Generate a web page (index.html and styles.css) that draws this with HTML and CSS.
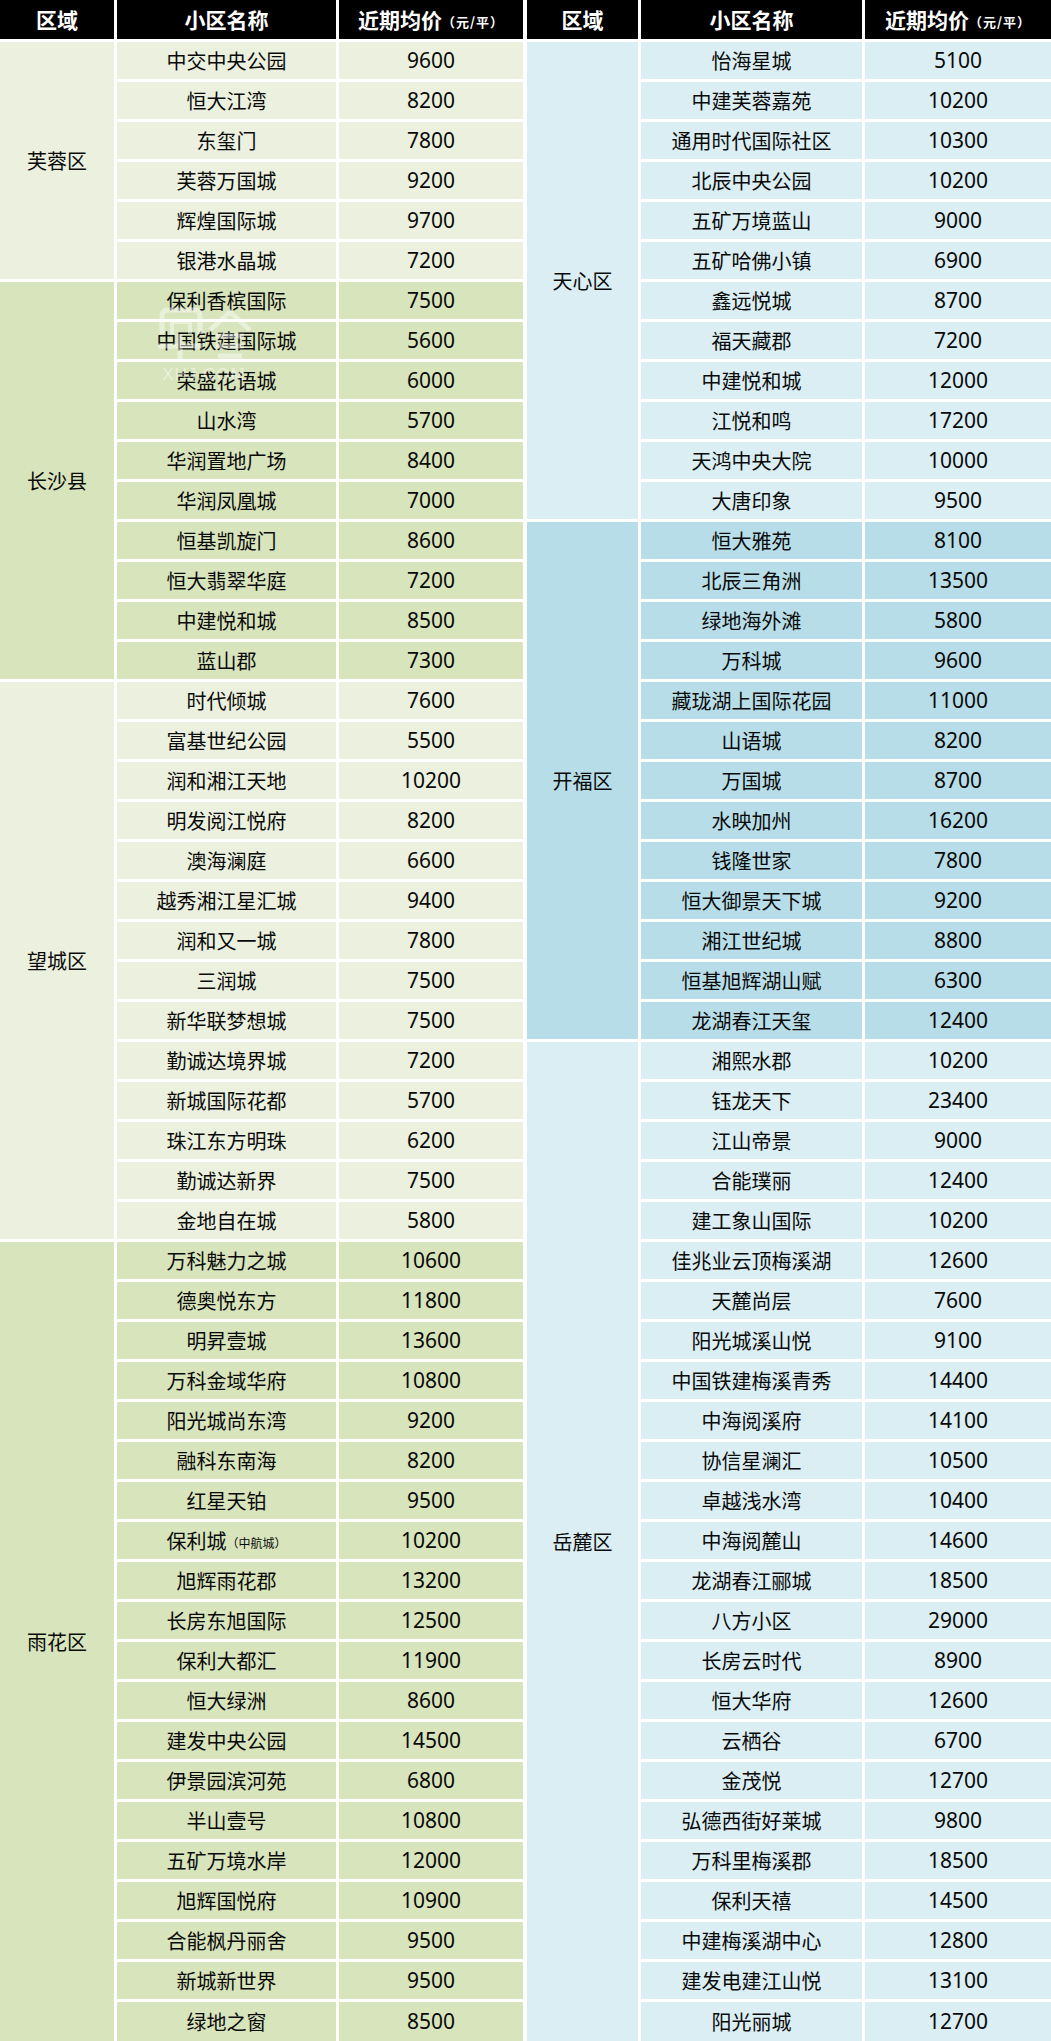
FILE: index.html
```html
<!DOCTYPE html>
<html lang="zh-CN">
<head>
<meta charset="utf-8">
<title>长沙楼盘近期均价</title>
<link rel="stylesheet" href="styles.css">
</head>
<body>
<div class="sheet">
  <div class="half left">
    <div class="head"><div>区域</div><div>小区名称</div><div>近期均价<span class="unit">（元/平）</span></div></div>

    <div class="group lg">
      <div class="district">芙蓉区</div>
      <div class="rows">
        <div class="row"><div>中交中央公园</div><div class="price">9600</div></div>
        <div class="row"><div>恒大江湾</div><div class="price">8200</div></div>
        <div class="row"><div>东玺门</div><div class="price">7800</div></div>
        <div class="row"><div>芙蓉万国城</div><div class="price">9200</div></div>
        <div class="row"><div>辉煌国际城</div><div class="price">9700</div></div>
        <div class="row"><div>银港水晶城</div><div class="price">7200</div></div>
      </div>
    </div>

    <div class="group g">
      <div class="district">长沙县</div>
      <div class="rows">
        <div class="row"><div>保利香槟国际</div><div class="price">7500</div></div>
        <div class="row"><div>中国铁建国际城</div><div class="price">5600</div></div>
        <div class="row"><div>荣盛花语城</div><div class="price">6000</div></div>
        <div class="row"><div>山水湾</div><div class="price">5700</div></div>
        <div class="row"><div>华润置地广场</div><div class="price">8400</div></div>
        <div class="row"><div>华润凤凰城</div><div class="price">7000</div></div>
        <div class="row"><div>恒基凯旋门</div><div class="price">8600</div></div>
        <div class="row"><div>恒大翡翠华庭</div><div class="price">7200</div></div>
        <div class="row"><div>中建悦和城</div><div class="price">8500</div></div>
        <div class="row"><div>蓝山郡</div><div class="price">7300</div></div>
      </div>
    </div>

    <div class="group lg">
      <div class="district">望城区</div>
      <div class="rows">
        <div class="row"><div>时代倾城</div><div class="price">7600</div></div>
        <div class="row"><div>富基世纪公园</div><div class="price">5500</div></div>
        <div class="row"><div>润和湘江天地</div><div class="price">10200</div></div>
        <div class="row"><div>明发阅江悦府</div><div class="price">8200</div></div>
        <div class="row"><div>澳海澜庭</div><div class="price">6600</div></div>
        <div class="row"><div>越秀湘江星汇城</div><div class="price">9400</div></div>
        <div class="row"><div>润和又一城</div><div class="price">7800</div></div>
        <div class="row"><div>三润城</div><div class="price">7500</div></div>
        <div class="row"><div>新华联梦想城</div><div class="price">7500</div></div>
        <div class="row"><div>勤诚达境界城</div><div class="price">7200</div></div>
        <div class="row"><div>新城国际花都</div><div class="price">5700</div></div>
        <div class="row"><div>珠江东方明珠</div><div class="price">6200</div></div>
        <div class="row"><div>勤诚达新界</div><div class="price">7500</div></div>
        <div class="row"><div>金地自在城</div><div class="price">5800</div></div>
      </div>
    </div>

    <div class="group g">
      <div class="district">雨花区</div>
      <div class="rows">
        <div class="row"><div>万科魅力之城</div><div class="price">10600</div></div>
        <div class="row"><div>德奥悦东方</div><div class="price">11800</div></div>
        <div class="row"><div>明昇壹城</div><div class="price">13600</div></div>
        <div class="row"><div>万科金域华府</div><div class="price">10800</div></div>
        <div class="row"><div>阳光城尚东湾</div><div class="price">9200</div></div>
        <div class="row"><div>融科东南海</div><div class="price">8200</div></div>
        <div class="row"><div>红星天铂</div><div class="price">9500</div></div>
        <div class="row"><div>保利城<span class="note">（中航城）</span></div><div class="price">10200</div></div>
        <div class="row"><div>旭辉雨花郡</div><div class="price">13200</div></div>
        <div class="row"><div>长房东旭国际</div><div class="price">12500</div></div>
        <div class="row"><div>保利大都汇</div><div class="price">11900</div></div>
        <div class="row"><div>恒大绿洲</div><div class="price">8600</div></div>
        <div class="row"><div>建发中央公园</div><div class="price">14500</div></div>
        <div class="row"><div>伊景园滨河苑</div><div class="price">6800</div></div>
        <div class="row"><div>半山壹号</div><div class="price">10800</div></div>
        <div class="row"><div>五矿万境水岸</div><div class="price">12000</div></div>
        <div class="row"><div>旭辉国悦府</div><div class="price">10900</div></div>
        <div class="row"><div>合能枫丹丽舍</div><div class="price">9500</div></div>
        <div class="row"><div>新城新世界</div><div class="price">9500</div></div>
        <div class="row last"><div>绿地之窗</div><div class="price">8500</div></div>
      </div>
    </div>
  </div>

  <div class="half right">
    <div class="head"><div>区域</div><div>小区名称</div><div>近期均价<span class="unit">（元/平）</span></div></div>

    <div class="group lb">
      <div class="district">天心区</div>
      <div class="rows">
        <div class="row"><div>怡海星城</div><div class="price">5100</div></div>
        <div class="row"><div>中建芙蓉嘉苑</div><div class="price">10200</div></div>
        <div class="row"><div>通用时代国际社区</div><div class="price">10300</div></div>
        <div class="row"><div>北辰中央公园</div><div class="price">10200</div></div>
        <div class="row"><div>五矿万境蓝山</div><div class="price">9000</div></div>
        <div class="row"><div>五矿哈佛小镇</div><div class="price">6900</div></div>
        <div class="row"><div>鑫远悦城</div><div class="price">8700</div></div>
        <div class="row"><div>福天藏郡</div><div class="price">7200</div></div>
        <div class="row"><div>中建悦和城</div><div class="price">12000</div></div>
        <div class="row"><div>江悦和鸣</div><div class="price">17200</div></div>
        <div class="row"><div>天鸿中央大院</div><div class="price">10000</div></div>
        <div class="row"><div>大唐印象</div><div class="price">9500</div></div>
      </div>
    </div>

    <div class="group b">
      <div class="district">开福区</div>
      <div class="rows">
        <div class="row"><div>恒大雅苑</div><div class="price">8100</div></div>
        <div class="row"><div>北辰三角洲</div><div class="price">13500</div></div>
        <div class="row"><div>绿地海外滩</div><div class="price">5800</div></div>
        <div class="row"><div>万科城</div><div class="price">9600</div></div>
        <div class="row"><div>藏珑湖上国际花园</div><div class="price">11000</div></div>
        <div class="row"><div>山语城</div><div class="price">8200</div></div>
        <div class="row"><div>万国城</div><div class="price">8700</div></div>
        <div class="row"><div>水映加州</div><div class="price">16200</div></div>
        <div class="row"><div>钱隆世家</div><div class="price">7800</div></div>
        <div class="row"><div>恒大御景天下城</div><div class="price">9200</div></div>
        <div class="row"><div>湘江世纪城</div><div class="price">8800</div></div>
        <div class="row"><div>恒基旭辉湖山赋</div><div class="price">6300</div></div>
        <div class="row"><div>龙湖春江天玺</div><div class="price">12400</div></div>
      </div>
    </div>

    <div class="group lb">
      <div class="district">岳麓区</div>
      <div class="rows">
        <div class="row"><div>湘熙水郡</div><div class="price">10200</div></div>
        <div class="row"><div>钰龙天下</div><div class="price">23400</div></div>
        <div class="row"><div>江山帝景</div><div class="price">9000</div></div>
        <div class="row"><div>合能璞丽</div><div class="price">12400</div></div>
        <div class="row"><div>建工象山国际</div><div class="price">10200</div></div>
        <div class="row"><div>佳兆业云顶梅溪湖</div><div class="price">12600</div></div>
        <div class="row"><div>天麓尚层</div><div class="price">7600</div></div>
        <div class="row"><div>阳光城溪山悦</div><div class="price">9100</div></div>
        <div class="row"><div>中国铁建梅溪青秀</div><div class="price">14400</div></div>
        <div class="row"><div>中海阅溪府</div><div class="price">14100</div></div>
        <div class="row"><div>协信星澜汇</div><div class="price">10500</div></div>
        <div class="row"><div>卓越浅水湾</div><div class="price">10400</div></div>
        <div class="row"><div>中海阅麓山</div><div class="price">14600</div></div>
        <div class="row"><div>龙湖春江郦城</div><div class="price">18500</div></div>
        <div class="row"><div>八方小区</div><div class="price">29000</div></div>
        <div class="row"><div>长房云时代</div><div class="price">8900</div></div>
        <div class="row"><div>恒大华府</div><div class="price">12600</div></div>
        <div class="row"><div>云栖谷</div><div class="price">6700</div></div>
        <div class="row"><div>金茂悦</div><div class="price">12700</div></div>
        <div class="row"><div>弘德西街好莱城</div><div class="price">9800</div></div>
        <div class="row"><div>万科里梅溪郡</div><div class="price">18500</div></div>
        <div class="row"><div>保利天禧</div><div class="price">14500</div></div>
        <div class="row"><div>中建梅溪湖中心</div><div class="price">12800</div></div>
        <div class="row"><div>建发电建江山悦</div><div class="price">13100</div></div>
        <div class="row last"><div>阳光丽城</div><div class="price">12700</div></div>
      </div>
    </div>
  </div>

  <div class="watermark" aria-hidden="true">
    <svg class="wm-logo" width="100" height="56" viewBox="0 0 100 56">
      <path d="M8 28 L8 10 Q8 4 14 4 L40 4 Q46 4 46 10 L46 28" fill="none" stroke="#fff" stroke-width="5"/>
      <path d="M18 28 L18 16 L36 16 L36 28" fill="none" stroke="#fff" stroke-width="4"/>
      <path d="M4 40 L48 40 M26 28 L26 54" fill="none" stroke="#fff" stroke-width="5"/>
      <path d="M56 24 L76 6 L96 24 M62 30 L90 30 M62 40 L90 40 M64 50 L88 50" fill="none" stroke="#fff" stroke-width="5"/>
    </svg>
    <div class="wm-text">XHJ.COM</div>
  </div>
</div>
</body>
</html>
```

FILE: styles.css
```css
html, body {
  margin: 0;
  padding: 0;
  background: #ffffff;
}

body {
  font-family: "Noto Sans", "Noto Sans CJK SC", sans-serif;
  color: #0a0a0a;
}

.sheet {
  position: relative;
  display: flex;
  gap: 4px;
  width: 1051px;
}

.half {
  display: flex;
  flex-direction: column;
  gap: 3px;
}

.left {
  width: 523px;
  --c1: 114px;
  --c2: 219px;
  --c3: 184px;
}

.right {
  width: 524px;
  --c1: 111px;
  --c2: 221px;
  --c3: 186px;
}

.head {
  display: grid;
  grid-template-columns: var(--c1) var(--c2) var(--c3);
  column-gap: 3px;
  height: 39px;
}

.head > div {
  background: #000000;
  color: #ffffff;
  font-family: "Noto Sans CJK SC", sans-serif;
  font-weight: 700;
  font-size: 21px;
  line-height: 1;
  display: flex;
  align-items: center;
  justify-content: center;
}

.unit {
  font-size: 13px;
  font-weight: 700;
  letter-spacing: 1px;
  margin-top: 4px;
}

.group {
  display: grid;
  grid-template-columns: var(--c1) 1fr;
  column-gap: 3px;
}

.district {
  display: flex;
  align-items: center;
  justify-content: center;
  font-family: "Noto Sans CJK SC", sans-serif;
  font-size: 20px;
  line-height: 1;
}

.rows {
  display: flex;
  flex-direction: column;
  gap: 3px;
}

.row {
  display: grid;
  grid-template-columns: var(--c2) var(--c3);
  column-gap: 3px;
  height: 37px;
}

.row.last {
  height: 39px;
}

.row > div {
  display: flex;
  align-items: center;
  justify-content: center;
  font-family: "Noto Sans CJK SC", sans-serif;
  font-size: 20px;
  line-height: 1;
  white-space: nowrap;
}

.row > .price {
  font-family: "Noto Sans", "Noto Sans CJK SC", sans-serif;
  font-size: 21px;
}

.note {
  font-size: 12px;
  margin-top: 4px;
}

.lg .district, .lg .row > div { background: #ebf1de; }
.g .district, .g .row > div { background: #d8e4bc; }
.lb .district, .lb .row > div { background: #daeef3; }
.b .district, .b .row > div { background: #b7dee8; }

.watermark {
  position: absolute;
  left: 152px;
  top: 306px;
  width: 104px;
  opacity: 0.45;
  pointer-events: none;
  display: flex;
  flex-direction: column;
  align-items: center;
}

.wm-logo {
  display: block;
}

.wm-text {
  color: #ffffff;
  font-family: "Liberation Sans", sans-serif;
  font-size: 17px;
  line-height: 1;
  margin-top: 4px;
  letter-spacing: 1px;
}
```
